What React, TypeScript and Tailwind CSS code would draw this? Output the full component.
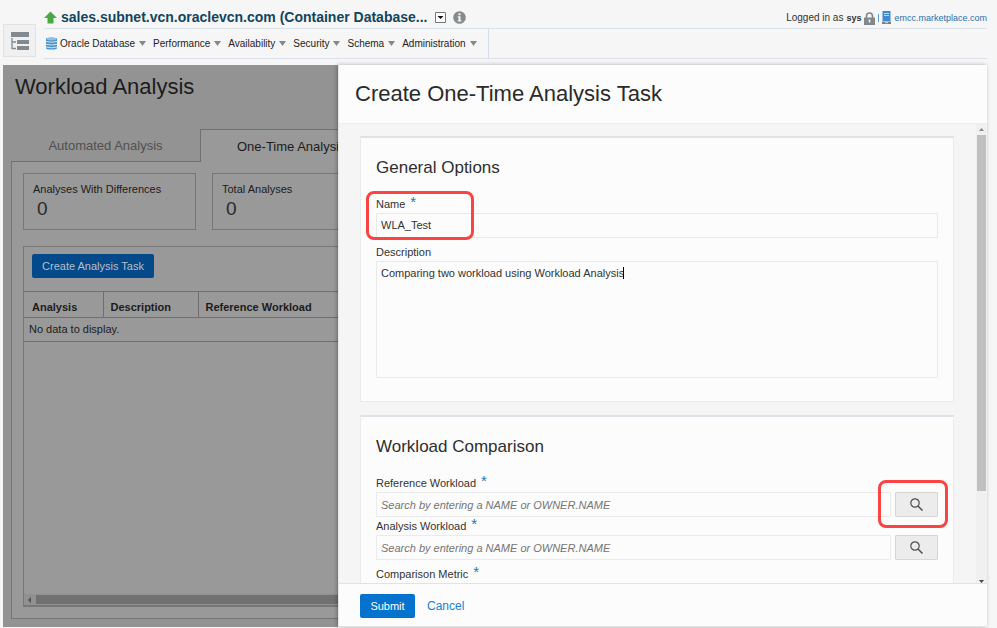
import type { ReactNode } from 'react';

const menus = ['Performance', 'Availability', 'Security', 'Schema', 'Administration'];

function Caret() {
  return (
    <svg className="h-[5px] w-[7px] shrink-0" viewBox="0 0 7 5" aria-hidden="true">
      <path d="M0 0h7L3.5 5z" fill="#85898b" />
    </svg>
  );
}

function Menu({ children }: { children: ReactNode }) {
  return (
    <button type="button" className="flex items-center gap-1 whitespace-nowrap text-[10px] leading-4 text-[#222]">
      {children}
      <Caret />
    </button>
  );
}

function Header() {
  return (
    <header className="flex h-[65px] shrink-0 pr-[10px] pl-[3px]">
      <button
        type="button"
        aria-label="Targets"
        className="mt-6 flex h-[33px] w-[33px] shrink-0 items-center justify-center border border-[#e2e2e2] bg-[#f0f0f0]"
      >
        <svg className="h-[20px] w-[20px]" viewBox="0 0 20 20" aria-hidden="true">
          <path d="M1 1h18v5H1zM7 9h12v4H7zM7 15h12v4H7z" fill="#82898f" />
          <path d="M2 7v10.500h4M2 11h4" fill="none" stroke="#82898f" strokeWidth="1.300" />
        </svg>
      </button>
      <div className="ml-2 flex min-w-0 flex-1 flex-col">
        <div className="flex h-[29px] items-end justify-between border-b border-[#dbe3ea]">
          <div className="flex items-center pb-px">
            <svg className="h-[13px] w-[13px]" viewBox="0 0 13 13" aria-hidden="true">
              <path d="M6.500 0.500 13 7H9.500v5.500h-6V7H0z" fill="#4ca645" />
            </svg>
            <h1 className="ml-1 whitespace-nowrap text-[14px] leading-5 font-bold text-[#10455f]">
              sales.subnet.vcn.oraclevcn.com (Container Database...
            </h1>
            <button type="button" aria-label="Target menu" className="ml-2">
              <svg className="h-[11px] w-[11px]" viewBox="0 0 11 11" aria-hidden="true">
                <path d="M.5.5h10v10H.5z" fill="#fff" stroke="#777" />
                <path d="M2.500 4h6L5.500 7z" fill="#111" />
              </svg>
            </button>
            <button type="button" aria-label="Target information" className="ml-[7px]">
              <svg className="h-[13px] w-[13px]" viewBox="0 0 13 13" aria-hidden="true">
                <circle cx="6.500" cy="6.500" r="6.300" fill="#858a8d" />
                <path d="M5.500 2.300h2v1.900h-2zM4.700 5.200h2.800v4h.9v1.200H4.700V9.200h.9V6.400h-.9z" fill="#f5f5f5" />
              </svg>
            </button>
          </div>
          <div className="flex items-center whitespace-nowrap pb-0.5 text-[10px] leading-4 text-[#333]">
            <span>Logged in as</span>
            <b className="ml-[3px] text-[9px]">sys</b>
            <svg className="ml-[3px] h-[13px] w-[11px]" viewBox="0 0 11 13" aria-hidden="true">
              <path d="M2.500 6V4a3 3 0 0 1 6 0v2" fill="none" stroke="#82878a" strokeWidth="1.600" />
              <path d="M0 5.500h11V13H0z" fill="#82878a" />
              <path d="M4.700 7.500h1.600v3H4.700z" fill="#f5f5f5" />
            </svg>
            <span className="mx-[3px] h-2 w-px bg-[#5f9ccf]" />
            <svg className="mb-0.5 h-[13px] w-[9px]" viewBox="0 0 9 13" aria-hidden="true">
              <path d="M.5 0h8v10h-8z" fill="#3f8bd0" />
              <path d="M2 2h5v1H2zM2 4h5v1H2z" fill="#b9d9f3" />
              <path d="M0 10.500h9V13H0z" fill="#75808a" />
              <path d="M3 11.300h3v.8H3z" fill="#eee" />
            </svg>
            <a href="#host" className="ml-[3px] text-[9px] text-[#2c6fad]">emcc.marketplace.com</a>
          </div>
        </div>
        <nav aria-label="Target menus" className="flex h-[30px] items-center border-b border-[#dbe0ea]">
          <div className="flex h-full items-center gap-[7px] border-r border-[#d5deea] pr-[11px]">
            <div className="flex items-center gap-0.5">
              <svg className="ml-px h-[13px] w-[13px]" viewBox="0 0 13 13" aria-hidden="true">
                <path d="M1 2q0-1.500 5.500-1.500T12 2v9q0 1.500-5.500 1.500T1 11z" fill="#4b92cf" />
                <path d="M1 4.500q5.500 1.500 11 0M1 7.300q5.500 1.500 11 0M1 10q5.500 1.500 11 0" fill="none" stroke="#d3e6f5" />
                <ellipse cx="6.500" cy="2" rx="5" ry="1.400" fill="#8dbfe8" />
              </svg>
              <Menu>Oracle Database</Menu>
            </div>
            {menus.map((name) => (
              <Menu key={name}>{name}</Menu>
            ))}
          </div>
        </nav>
      </div>
    </header>
  );
}

function Stat({ label, value }: { label: string; value: number }) {
  return (
    <div className="h-[57px] w-[173px] shrink-0 border border-[#777] px-[9px] pt-[7px]">
      <div className="text-[11px] leading-4 text-[#1c1c1c]">{label}</div>
      <div className="pl-1 text-[19px] leading-6 text-[#2a2a2a]">{value}</div>
    </div>
  );
}

function Background() {
  return (
    <main className="flex w-[335px] shrink-0 flex-col overflow-hidden bg-[#939393] pb-2 pl-2 text-[#1c1c1c]">
      <h2 className="mt-2 ml-1 text-[22px] leading-7 whitespace-nowrap">Workload Analysis</h2>
      <div role="tablist" className="mt-7 flex h-[33px] shrink-0 text-[13px]">
        <button type="button" role="tab" aria-selected="false" className="w-[189px] shrink-0 border-b border-[#707070] pt-0.5 text-[#505050]">
          Automated Analysis
        </button>
        <button
          type="button"
          role="tab"
          aria-selected="true"
          className="shrink-0 border-t border-l border-[#707070] bg-[#999] px-9 pt-0.5 whitespace-nowrap"
        >
          One-Time Analysis
        </button>
      </div>
      <div className="flex min-h-0 flex-1 flex-col border-b border-l border-[#74747a] bg-[#999] pt-[11px] pb-[11px] pl-[11px]">
        <div className="flex gap-4">
          <Stat label="Analyses With Differences" value={0} />
          <Stat label="Total Analyses" value={0} />
        </div>
        <section className="mt-4 flex min-h-0 flex-1 flex-col border border-r-0 border-b-2 border-[#777]">
          <button
            type="button"
            className="mt-[7px] ml-2 h-6 w-[122px] shrink-0 rounded-[2px] bg-[#04498a] text-[11px] text-[#b8bfc6]"
          >
            Create Analysis Task
          </button>
          <table className="mt-[13px] w-full border-collapse text-left text-[11px] leading-4">
            <thead>
              <tr className="h-[26px] border-y border-[#6f6f6f]">
                <th className="w-[79px] border-r border-[#6f6f6f] pt-1 pl-2">Analysis</th>
                <th className="w-[95px] border-r border-[#6f6f6f] pt-1 pl-[7px]">Description</th>
                <th className="pt-1 pl-[7px]">Reference Workload</th>
              </tr>
            </thead>
            <tbody>
              <tr className="h-6 border-b border-[#6f6f6f]">
                <td colSpan={3} className="pb-0.5 pl-[5px]">No data to display.</td>
              </tr>
            </tbody>
          </table>
          <div className="mt-auto flex h-[11px] shrink-0 items-center bg-[#919191] pl-1">
            <svg className="h-[6px] w-[3px]" viewBox="0 0 3 6" aria-hidden="true">
              <path d="M3 0v6L0 3z" fill="#505050" />
            </svg>
            <div className="ml-[5px] h-[9px] flex-1 bg-[#717171]" />
          </div>
        </section>
      </div>
    </main>
  );
}

function Label({ htmlFor, children, required }: { htmlFor: string; children: ReactNode; required?: boolean }) {
  return (
    <label htmlFor={htmlFor} className="mb-px flex h-4 gap-[5px] text-[11px] leading-4 text-[#333]">
      {children}
      {required && <span className="text-[15px] leading-3 text-[#1a7ab8]">*</span>}
    </label>
  );
}

function Card({ title, children }: { title: string; children: ReactNode }) {
  return (
    <section className="shrink-0 border border-t-2 border-[#ebebeb] border-t-[#dfe1e6] bg-[#fcfcfc] px-[15px] pt-[17px] pb-[23px]">
      <h3 className="mb-[15px] text-[17px] leading-[26px] text-[#2e2e2e]">{title}</h3>
      {children}
    </section>
  );
}

function Highlight({ className }: { className: string }) {
  return <div className={`pointer-events-none absolute rounded-lg border-3 border-[#fa4343] ${className}`} />;
}

function SearchField({ id, label, highlighted }: { id: string; label: string; highlighted?: boolean }) {
  return (
    <div className="mb-px">
      <Label htmlFor={id} required>{label}</Label>
      <div className="flex gap-1">
        <input
          id={id}
          placeholder="Search by entering a NAME or OWNER.NAME"
          className="h-[25px] min-w-0 flex-1 rounded-[1px] border border-[#ebebeb] bg-[#fcfcfc] px-1 text-[11px] italic outline-none placeholder:text-[#757575]"
        />
        <div className="relative">
          <button
            type="button"
            aria-label={`Search ${label}`}
            className="flex h-[25px] w-[43px] items-center justify-center rounded-[1px] border border-[#d6d6d6] bg-[#ececec]"
          >
            <svg className="h-[13px] w-[13px]" viewBox="0 0 13 13" fill="none" stroke="#4f4f4f" aria-hidden="true">
              <circle cx="5" cy="5" r="4.200" strokeWidth="1.200" />
              <path d="M8 8l4.500 4.500" strokeWidth="1.500" />
            </svg>
          </button>
          {highlighted && <Highlight className="-top-3 -left-[17px] h-[48px] w-[70px]" />}
        </div>
      </div>
    </div>
  );
}

function Drawer() {
  return (
    <section role="dialog" aria-label="Create One-Time Analysis Task" className="z-10 flex min-w-0 flex-1 flex-col border-l border-[#e6e6e6] bg-[#fcfcfc] shadow-[-1px_0_4px_rgba(0,0,0,0.3)]">
      <header className="h-[59px] shrink-0 border-b border-[#efefef] px-4 pt-[15px]">
        <h2 className="text-[22px] leading-7 text-[#2a2a2a]">Create One-Time Analysis Task</h2>
      </header>
      <div className="flex min-h-0 flex-1 bg-[#f5f5f5]">
        <form className="flex min-w-0 flex-1 flex-col gap-[13px] overflow-hidden pt-3 pr-[22px] pl-[21px]">
          <Card title="General Options">
            <div className="relative mb-1.5">
              <Label htmlFor="name" required>Name</Label>
              <input
                id="name"
                defaultValue="WLA_Test"
                className="block h-[25px] w-full rounded-[1px] border border-[#e9e9e9] bg-[#fcfcfc] px-1 pb-0.5 text-[11px] text-[#333] outline-none"
              />
              <Highlight className="-top-[5px] -left-[10px] h-[49px] w-[108px]" />
            </div>
            <Label htmlFor="description">Description</Label>
            <div className="relative">
              <textarea
                id="description"
                defaultValue="Comparing two workload using Workload Analysis"
                className="block h-[117px] w-full resize-none rounded-[1px] border border-[#e9e9e9] bg-[#fcfcfc] px-1 pt-[3px] text-[11px] leading-4 text-[#333] outline-none"
              />
              <span className="pointer-events-none absolute top-1 left-1 flex text-[11px] leading-4" aria-hidden="true">
                <span className="mt-0.5 ml-[243px] h-3 w-px bg-black" />
              </span>
            </div>
          </Card>
          <Card title="Workload Comparison">
            <SearchField id="reference" label="Reference Workload" highlighted />
            <SearchField id="analysis" label="Analysis Workload" />
            <div className="mt-1.5">
              <Label htmlFor="metric" required>Comparison Metric</Label>
              <select id="metric" className="h-[25px] w-full border border-[#e9e9e9]" />
            </div>
          </Card>
        </form>
        <div className="flex w-[11px] shrink-0 flex-col items-center bg-[#f0f0f0]" aria-hidden="true">
          <svg className="mt-1 h-[3px] w-[5px] shrink-0" viewBox="0 0 5 3">
            <path d="M2.500 0 5 3H0z" fill="#888" />
          </svg>
          <div className="mt-1 h-[356px] w-[9px] bg-[#c0c0c0]" />
          <svg className="mt-auto h-[3px] w-[5px] shrink-0" viewBox="0 0 5 3">
            <path d="M0 0h5L2.500 3z" fill="#444" />
          </svg>
        </div>
      </div>
      <footer className="flex h-[44px] shrink-0 items-center gap-3 border-y border-[#e2e2e2] px-[21px] pt-0.5">
        <button type="button" className="h-6 w-[55px] rounded-[2px] bg-[#0572ce] text-[11px] text-white">Submit</button>
        <button type="button" className="text-[12px] text-[#1b7fd6]">Cancel</button>
      </footer>
    </section>
  );
}

export default function App() {
  return (
    <div className="flex h-screen flex-col bg-[#f6f6f6] font-['Liberation_Sans',Arial,sans-serif]">
      <Header />
      <div className="flex min-h-0 flex-1 pr-[10px] pb-px pl-[3px]">
        <Background />
        <Drawer />
      </div>
    </div>
  );
}
